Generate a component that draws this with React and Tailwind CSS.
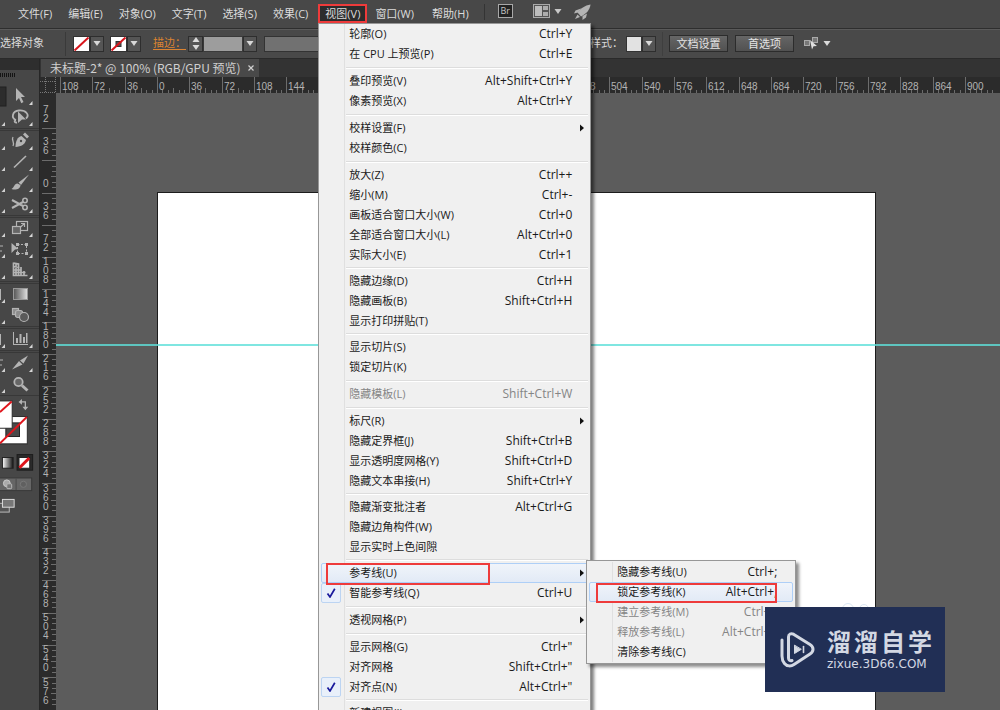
import { useState } from "react";
import clsx from "clsx";

const MENUS_BEFORE = ["文件(F)", "编辑(E)", "对象(O)", "文字(T)", "选择(S)", "效果(C)"];
const MENUS_AFTER = ["窗口(W)", "帮助(H)"];

const VIEW_MENU = [
  [
    { label: "轮廓(O)", keys: "Ctrl+Y" },
    { label: "在 CPU 上预览(P)", keys: "Ctrl+E" },
  ],
  [
    { label: "叠印预览(V)", keys: "Alt+Shift+Ctrl+Y" },
    { label: "像素预览(X)", keys: "Alt+Ctrl+Y" },
  ],
  [{ label: "校样设置(F)", arrow: true }, { label: "校样颜色(C)" }],
  [
    { label: "放大(Z)", keys: "Ctrl++" },
    { label: "缩小(M)", keys: "Ctrl+-" },
    { label: "画板适合窗口大小(W)", keys: "Ctrl+0" },
    { label: "全部适合窗口大小(L)", keys: "Alt+Ctrl+0" },
    { label: "实际大小(E)", keys: "Ctrl+1" },
  ],
  [
    { label: "隐藏边缘(D)", keys: "Ctrl+H" },
    { label: "隐藏画板(B)", keys: "Shift+Ctrl+H" },
    { label: "显示打印拼贴(T)" },
  ],
  [{ label: "显示切片(S)" }, { label: "锁定切片(K)" }],
  [{ label: "隐藏模板(L)", keys: "Shift+Ctrl+W", disabled: true }],
  [
    { label: "标尺(R)", arrow: true },
    { label: "隐藏定界框(J)", keys: "Shift+Ctrl+B" },
    { label: "显示透明度网格(Y)", keys: "Shift+Ctrl+D" },
    { label: "隐藏文本串接(H)", keys: "Shift+Ctrl+Y" },
  ],
  [
    { label: "隐藏渐变批注者", keys: "Alt+Ctrl+G" },
    { label: "隐藏边角构件(W)" },
    { label: "显示实时上色间隙" },
  ],
  [
    { label: "参考线(U)", arrow: true, active: true, submenu: true },
    { label: "智能参考线(Q)", keys: "Ctrl+U", checked: true },
  ],
  [{ label: "透视网格(P)", arrow: true }],
  [
    { label: "显示网格(G)", keys: 'Ctrl+"' },
    { label: "对齐网格", keys: 'Shift+Ctrl+"' },
    { label: "对齐点(N)", keys: 'Alt+Ctrl+"', checked: true },
  ],
  [{ label: "新建视图(I)..." }],
];

const GUIDES_MENU = [
  { label: "隐藏参考线(U)", keys: "Ctrl+;" },
  { label: "锁定参考线(K)", keys: "Alt+Ctrl+;", active: true, marked: true },
  { label: "建立参考线(M)", keys: "Ctrl+5", disabled: true },
  { label: "释放参考线(L)", keys: "Alt+Ctrl+5", disabled: true },
  { label: "清除参考线(C)" },
];

// ruler geometry: 36 units between labels
const STEP = 32.32;
const UNIT = 36;

function Caret({ className }) {
  return (
    <svg viewBox="0 0 8 5" className={clsx("h-[5px] w-2", className)} fill="currentColor">
      <path d="M0.5 0h7L4 5z" />
    </svg>
  );
}

function MenuRow({ item, children }) {
  return (
    <li className="relative">
      <button
        type="button"
        disabled={item.disabled}
        className={clsx(
          "flex h-5 w-full items-center rounded-[2px] border text-left",
          item.active
            ? "border-[#aecff7] bg-gradient-to-b from-[#f0f4fa] to-[#e2eaf6]"
            : "border-transparent",
          item.disabled ? "text-[#858585]" : "text-[#1a1a1a]"
        )}
      >
        <span className="flex w-[27px] shrink-0">
          {item.checked ? (
            <span className="-ml-px flex size-5 items-center justify-center rounded-[2px] border border-[#bcd4f2] bg-[#e9f0fa]">
              <svg viewBox="0 0 10 10" className="size-[10px]" fill="none" stroke="#1a1a9c" strokeWidth="1.7">
                <path d="M1.5 5.5L4 9L8.8 0.8" />
              </svg>
            </span>
          ) : null}
        </span>
        <span className="flex-1 text-[11px] leading-4 whitespace-nowrap">{item.label}</span>
        <span className="text-[12px] leading-4">{item.keys}</span>
        <span className="flex w-[15px] shrink-0 justify-center">
          {item.arrow ? (
            <svg viewBox="0 0 4 8" className="ml-1 h-2 w-1" fill="#111">
              <path d="M0 0.5L4 4L0 7.5z" />
            </svg>
          ) : null}
        </span>
      </button>
      {children}
    </li>
  );
}

function GuidesMenu() {
  return (
    <ul className="absolute -top-[3px] left-full -ml-[2px] w-[210px] border border-[#979797] bg-[#f0f0f0] px-[2px] py-[1px] shadow-[3px_3px_3px_rgba(0,0,0,0.45)]">
      <li className="absolute inset-y-[1px] left-[25px] w-px bg-[#e0e0e0]" />
      {GUIDES_MENU.map((item) => (
        <MenuRow key={item.label} item={item}>
          {item.marked ? (
            <span className="pointer-events-none absolute top-px left-[7px] h-5 w-[181px] border-2 border-[#ee3b3b]" />
          ) : null}
        </MenuRow>
      ))}
    </ul>
  );
}

function ViewMenu() {
  return (
    <div className="absolute top-full left-0 z-20 w-[273px] border border-[#979797] bg-[#f0f0f0] px-[2px] shadow-[3px_3px_3px_rgba(0,0,0,0.5)]">
      <div className="absolute inset-y-0 left-[25px] w-px bg-[#e0e0e0]" />
      {VIEW_MENU.map((group, index) => (
        <div key={group[0].label}>
          {index > 0 ? (
            <div
              className={clsx(
                "ml-[25px] flex items-center",
                VIEW_MENU[index - 1].length > 2 ? "h-[6px]" : "h-[7px]"
              )}
            >
              <div className="h-[2px] w-full border-t border-[#dddddd] bg-white" />
            </div>
          ) : null}
          <ul>
            {group.map((item) => (
              <MenuRow key={item.label} item={item}>
                {item.submenu ? (
                  <>
                    <span className="pointer-events-none absolute top-0 left-[5px] z-10 h-[22px] w-[164px] border-2 border-[#ee3b3b]" />
                    <GuidesMenu />
                  </>
                ) : null}
              </MenuRow>
            ))}
          </ul>
        </div>
      ))}
    </div>
  );
}

function MenuBar() {
  const [open, setOpen] = useState(true);
  const itemClass = "h-[19px] px-2 text-[11px] leading-4 whitespace-nowrap";

  return (
    <nav className="flex h-7 shrink-0 items-start bg-[#484848] pt-1 pl-[10px] text-[#dcdcdc]">
      {MENUS_BEFORE.map((name) => (
        <button key={name} type="button" className={itemClass}>
          {name}
        </button>
      ))}
      <div className="relative ml-[2px] flex">
        <button
          type="button"
          onClick={() => setOpen(!open)}
          className="h-[19px] border-2 border-[#ee3b3b] bg-[#2c2c2c] px-[5px] text-[11px] leading-4 whitespace-nowrap"
        >
          视图(V)
        </button>
        {open ? <ViewMenu /> : null}
      </div>
      <div className="flex gap-[2px]">
        {MENUS_AFTER.map((name) => (
          <button key={name} type="button" className={itemClass}>
            {name}
          </button>
        ))}
      </div>
      <span className="ml-[7px] h-4 w-px bg-[#343434]" />
      <button
        type="button"
        className="ml-[13px] flex h-[14px] w-[15px] items-center justify-center border border-[#a8a8a8] bg-[#222] text-[9px] leading-3 text-[#c4c4c4]"
      >
        Br
      </button>
      <button type="button" aria-label="排列文档" className="ml-5 flex items-center gap-1 text-[#c8c8c8]">
        <svg viewBox="0 0 17 14" className="h-[14px] w-[17px]">
          <rect x="0.5" y="0.5" width="16" height="13" fill="#555" stroke="#aaa" />
          <rect x="2" y="2" width="7" height="10" fill="#bdbdbd" />
          <rect x="10" y="2" width="5" height="4" fill="#adadad" />
          <rect x="10" y="8" width="5" height="4" fill="#adadad" />
        </svg>
        <Caret />
      </button>
      <button type="button" aria-label="GPU 性能" className="ml-3">
        <svg viewBox="0 0 17 16" className="h-4 w-[17px]" fill="#b4b4b4">
          <path d="M16.500 0.500C11 1.500 6 4.500 3.500 8.500l3.500 4c5-2.500 9-6.500 9.500-12z" />
          <path d="M7 4.500L1.500 6.500L0 9.500L4 8.500zM13 9.500L12 13.500L8.500 16L8.500 12z" />
          <path d="M3.500 10.500L1 15L6 13z" />
        </svg>
      </button>
    </nav>
  );
}

function DropButton({ label }) {
  return (
    <button
      type="button"
      aria-label={label}
      className="flex h-4 w-[14px] shrink-0 items-center justify-center border border-[#2e2e2e] bg-[#555] text-[#d8d8d8]"
    >
      <Caret />
    </button>
  );
}

function NoneSwatch({ stroke }) {
  return (
    <svg viewBox="0 0 17 16" className="h-4 w-[17px] shrink-0">
      <rect x="0.5" y="0.5" width="16" height="15" fill="#fff" stroke="#333" />
      {stroke ? <rect x="6" y="5.500" width="5" height="5" fill="#555" stroke="#333" /> : null}
      <path d="M1.500 14.500L15.500 1.500" stroke="#d8151c" strokeWidth="2" />
    </svg>
  );
}

function ControlBar() {
  const buttonClass =
    "h-[17px] w-[59px] shrink-0 border border-[#2c2c2c] bg-gradient-to-b from-[#666] to-[#515151] text-[11px] leading-[15px] text-[#e4e4e4]";

  return (
    <div className="flex h-[31px] shrink-0 items-center overflow-hidden border-t border-b border-t-[#2e2e2e] border-b-[#2a2a2a] bg-[#494949] text-[11px] text-[#dadada] shadow-[inset_0_1px_0_#5a5a5a]">
      <span className="-ml-[11px] w-[76px] shrink-0 whitespace-nowrap">未选择对象</span>
      <span className="mr-[7px] h-6 w-px shrink-0 bg-[#3a3a3a]" />
      <NoneSwatch />
      <DropButton label="填色" />
      <span className="w-[6px] shrink-0" />
      <NoneSwatch stroke />
      <DropButton label="描边颜色" />
      <label
        htmlFor="stroke-width"
        className="ml-3 shrink-0 text-[#dc8431] underline underline-offset-2"
      >
        描边：
      </label>
      <button
        type="button"
        aria-label="描边粗细"
        className="ml-[2px] flex h-4 w-[15px] shrink-0 flex-col items-center justify-center gap-[3px] border border-[#2e2e2e] bg-[#555]"
      >
        <Caret className="h-1 rotate-180" />
        <Caret className="h-1" />
      </button>
      <input id="stroke-width" className="h-4 w-10 shrink-0 border border-[#3a3a3a] bg-[#9d9d9d]" />
      <DropButton label="粗细" />
      <span className="ml-[7px] h-4 w-[300px] shrink-0 border border-[#333] bg-[#717171]" />
      <span className="ml-1 w-[58px] shrink-0 whitespace-nowrap">图形样式：</span>
      <span className="h-4 w-[16px] shrink-0 border border-[#333] bg-[#e2e2e2]" />
      <DropButton label="样式" />
      <span className="mx-[6px] h-6 w-px shrink-0 bg-[#3f3f3f]" />
      <button type="button" className={buttonClass}>
        文档设置
      </button>
      <button type="button" className={clsx(buttonClass, "ml-[7px]")}>
        首选项
      </button>
      <button type="button" aria-label="对齐选项" className="ml-[10px] flex items-center gap-1">
        <svg viewBox="0 0 15 13" className="h-[13px] w-[15px]">
          <rect x="0.5" y="3.500" width="5" height="5" fill="#777" stroke="#aaa" />
          <rect x="8.500" y="0.5" width="5" height="5" fill="#777" stroke="#aaa" />
          <path d="M6 3l7 6-3.500 0.200L8 12.500z" fill="#e0e0e0" />
        </svg>
        <Caret />
      </button>
    </div>
  );
}

const g = "#b4b4b4";

const TOOL_GROUPS = [
  [
    { name: "直接选择", icon: <path d="M6 2l9 9h-4l2.500 5-2.200 1.200L9 12l-3 3z" fill={g} /> },
    {
      name: "套索",
      icon: (
        <g fill="none" stroke={g} strokeWidth="1.800">
          <path d="M6 13C1 11 2 4 9 3.500C16 3 20 8 16 11.500M6 13c-2 0-2 3 1 2.500" />
          <path d="M8 4.500l8 8h-4L8 16z" fill={g} stroke="none" />
        </g>
      ),
    },
  ],
  [
    {
      name: "曲率",
      icon: (
        <g fill={g}>
          <path d="M5.500 16c0-6 2-10 6-11l4.500 4c-1 4.500-4.500 6.500-10.500 7z" />
          <path d="M13 3.500L15 1.500l4 4-2 2z" />
          <circle cx="11" cy="10" r="1.200" fill="#494949" />
          <path d="M3 6c-2 3 2 5 0 9" fill="none" stroke={g} strokeWidth="1.300" />
        </g>
      ),
    },
    { name: "直线段", icon: <path d="M4 15.500L16 4" stroke={g} strokeWidth="1.600" /> },
    {
      name: "画笔",
      icon: (
        <g fill={g}>
          <path d="M19 1.500L8.500 9.500l2.500 2.500z" />
          <path d="M7.500 10.500c-3.500 0-3 4-6 5.500c4 1.500 9 0 9-4z" />
        </g>
      ),
    },
    {
      name: "剪刀",
      icon: (
        <g fill="none" stroke={g} strokeWidth="1.600">
          <circle cx="15" cy="6.500" r="2.200" />
          <circle cx="15" cy="13.500" r="2.200" />
          <path d="M2 6l11 6M2 14l11-6" strokeWidth="2" />
        </g>
      ),
    },
  ],
  [
    {
      name: "比例缩放",
      icon: (
        <g fill="none" stroke={g} strokeWidth="1.200">
          <rect x="6.500" y="3.500" width="11" height="9" />
          <rect x="2.500" y="8.500" width="8" height="7" fill="#666" />
          <path d="M10 9.500L14.500 5.500M11 5.500h3.500v3.500" />
        </g>
      ),
    },
    {
      name: "自由变换",
      icon: (
        <g fill={g}>
          <path d="M1.500 4l7 6-3.500 0.500L1.500 14z" />
          <path d="M7.500 5.500h9v9h-9z" fill="none" stroke={g} strokeDasharray="2 1.500" />
          <path d="M6 4h3v3H6zM15 4h3v3h-3zM15 13h3v3h-3zM6 13h3v3H6z" />
        </g>
      ),
    },
    {
      name: "透视网格",
      icon: (
        <g fill="none" stroke={g} strokeWidth="1.700">
          <path d="M3.500 2.500v13h14M3.500 3l5 1v11M6 3v12M3.500 6.500l6 1M3.500 10h8M3.500 12.500h12M11 7v8M14 11v4" />
        </g>
      ),
    },
  ],
  [
    {
      name: "渐变",
      noCorner: true,
      icon: (
        <>
          <defs>
            <linearGradient id="tool-fade">
              <stop offset="0" stopColor="#555" />
              <stop offset="1" stopColor="#e0e0e0" />
            </linearGradient>
          </defs>
          <rect x="3.500" y="4.500" width="14" height="11" fill="url(#tool-fade)" stroke="#999" />
        </>
      ),
    },
    {
      name: "混合",
      noCorner: true,
      icon: (
        <g fill="#8d8d8d" stroke={g} strokeWidth="1.200">
          <rect x="2.500" y="3.500" width="6" height="6" />
          <rect x="5.500" y="5.500" width="7" height="7" rx="2" />
          <circle cx="14" cy="12" r="4.500" fill="#5a5a5a" />
        </g>
      ),
    },
  ],
  [
    {
      name: "柱形图",
      icon: (
        <g fill={g}>
          <path d="M3 3h1v12h14v1H3z" />
          <path d="M6 9h2v5H6zM9.500 5h2v9h-2zM13 8h2v6h-2zM16 4h1.500v10H16z" />
        </g>
      ),
    },
  ],
  [
    {
      name: "切片",
      icon: <path d="M2 16.500L9 8l3.500 3.500zM10 7.500l8-5-4.500 8z" fill={g} />,
    },
    {
      name: "缩放",
      noCorner: true,
      icon: (
        <g fill="none" stroke={g}>
          <circle cx="8.500" cy="8" r="4.200" strokeWidth="1.800" fill="#666" />
          <path d="M12 11.500l5.500 5" strokeWidth="3" />
        </g>
      ),
    },
  ],
];

function ToolPanel() {
  return (
    <aside className="flex w-10 shrink-0 flex-col overflow-hidden border-r border-[#262626] bg-[#2e2e2e] pt-[11px]">
      <div className="flex-1 bg-[#474747]">
        <div className="h-4 pt-[3px]">
          <div className="h-1 w-4 bg-[repeating-linear-gradient(90deg,#141414_0_1px,#474747_1px_2px)]" />
        </div>
        {TOOL_GROUPS.map((group, index) => (
          <div
            key={group[0].name}
            className={clsx(index > 0 && "border-t-3 border-double border-[#383838]")}
          >
            {group.map((tool) => (
              <div key={tool.name} className="flex h-[21px] items-center">
                <svg viewBox="0 0 10 21" className="h-[21px] w-[10px]">
                  {tool.name === "直接选择" ? (
                    <rect x="-1" y="1" width="7" height="19" fill="#2c2c2c" stroke="#202020" />
                  ) : (
                    <path d="M5 15v4H1.500z" fill="#d0d0d0" />
                  )}
                  {tool.name === "柱形图" || tool.name === "渐变" ? (
                    <path d="M0 5v11" stroke={g} strokeWidth="2" />
                  ) : null}
                  {tool.name === "切片" || tool.name === "自由变换" ? (
                    <path d="M0 7h3M0 12h2" stroke={g} />
                  ) : null}
                </svg>
                <button type="button" aria-label={tool.name} className="h-[21px] w-[23px]">
                  <svg viewBox="0 0 23 21" className="h-[21px] w-[23px]">
                    {tool.icon}
                    {tool.noCorner ? null : <path d="M22.500 15v4H19z" fill="#d8d8d8" />}
                  </svg>
                </button>
              </div>
            ))}
          </div>
        ))}
        <div className="flex border-t border-[#383838]">
          <svg viewBox="0 2 40 122" className="h-[122px] w-10">
            <defs>
              <linearGradient id="panel-fade">
                <stop offset="0" stopColor="#fff" />
                <stop offset="1" stopColor="#111" />
              </linearGradient>
            </defs>
            <path d="M21 6.500h5v6" fill="none" stroke={g} strokeWidth="1.300" />
            <path d="M19 6.500l3.500-3v6zM23 11.500h6l-3 3.500z" fill={g} />
            <rect x="-8" y="21.500" width="36" height="28" fill="#fff" stroke="#2a2a2a" />
            <rect x="6" y="28" width="14" height="14" fill="#4a4a4a" stroke="#222" />
            <path d="M0 49L27.500 22" stroke="#e0151c" strokeWidth="2" />
            <rect x="-8" y="5.500" width="20.500" height="28" fill="#fff" stroke="#2a2a2a" />
            <path d="M0 17L12 6" stroke="#e0151c" strokeWidth="2" />
            <rect x="17.500" y="60.500" width="16" height="16" fill="#2a2a2a" stroke="#1c1c1c" />
            <rect x="2.500" y="63.500" width="11" height="11" fill="url(#panel-fade)" stroke="#222" />
            <rect x="19.500" y="63.500" width="11" height="11" fill="#fff" stroke="#222" />
            <path d="M20 74L30 64" stroke="#e0151c" strokeWidth="3" />
            <rect x="-2" y="84.500" width="34.500" height="13" fill="#666" stroke="#383838" />
            <path d="M16.500 85v12" stroke="#4a4a4a" />
            <circle cx="7" cy="90" r="3.500" fill="#aaa" stroke="#ccc" />
            <rect x="7" y="90.500" width="5" height="5" rx="1" fill="#777" stroke="#bbb" />
            <circle cx="24" cy="91" r="3.200" fill="#606060" stroke="#777" />
            <rect x="-2" y="110.500" width="11.500" height="9" fill="#555" stroke="#bbb" />
            <rect x="2.500" y="106.500" width="12" height="8" fill="#777" stroke="#ddd" />
          </svg>
        </div>
      </div>
    </aside>
  );
}

function rulerMarks(length, first) {
  return Array.from({ length: Math.floor(length / STEP) }, (_, i) => i + first);
}

function HorizontalRuler() {
  return (
    <svg
      className="h-4 min-w-0 flex-1 bg-[#2b2b2b] font-['Liberation_Sans',sans-serif]"
      fontSize="10"
      fill="#b2b2b2"
    >
      {rulerMarks(window.innerWidth - 56, -3).map((n) => {
        const x = 101 + n * STEP;
        return (
          <g key={n}>
            <path d={`M${Math.round(x)}.5 0v16`} stroke="#6c6c6c" />
            {[1, 2, 3, 4, 5].map((k) => (
              <path
                key={k}
                d={`M${Math.round(x + (k * STEP) / 6)}.5 ${k === 3 ? 11 : 13}v5`}
                stroke="#6c6c6c"
              />
            ))}
            <text x={Math.round(x) + 2} y="13">
              {Math.abs(n * UNIT)}
            </text>
          </g>
        );
      })}
    </svg>
  );
}

function VerticalRuler() {
  return (
    <svg
      className="h-full w-4 shrink-0 bg-[#2b2b2b] font-['Liberation_Sans',sans-serif]"
      fontSize="10"
      fill="#b2b2b2"
    >
      {rulerMarks(window.innerHeight - 93, -2).map((n) => {
        const y = 99.5 + n * STEP;
        const digits = String(Math.abs(n * UNIT)).split("");
        return (
          <g key={n}>
            <path d={`M2 ${Math.round(y)}.5h14`} stroke="#6c6c6c" />
            {[1, 2, 3, 4, 5].map((k) => (
              <path
                key={k}
                d={`M${k === 3 ? 11 : 12} ${Math.round(y + (k * STEP) / 6)}.5h5`}
                stroke="#6c6c6c"
              />
            ))}
            {digits.map((digit, k) => (
              <text key={k} x="3" y={Math.round(y) - 6 - (digits.length - 1 - k) * 9}>
                {digit}
              </text>
            ))}
          </g>
        );
      })}
    </svg>
  );
}

function DocumentArea() {
  return (
    <main className="flex min-w-0 flex-1 flex-col">
      <div className="flex h-[18px] shrink-0 items-stretch bg-[#333] pl-px">
        <div className="flex items-center gap-[7px] bg-[#494949] pr-[5px] pl-[9px] text-[#d0d0d0]">
          <h1 className="font-['Noto_Sans_CJK_SC',sans-serif] text-[12px] leading-4 whitespace-nowrap">
            未标题-2* @ 100% (RGB/GPU 预览)
          </h1>
          <button type="button" aria-label="关闭">
            <svg viewBox="0 0 6 6" className="size-[6px]" stroke="currentColor" strokeWidth="1.200">
              <path d="M0.500 0.500l5 5M5.500 0.500l-5 5" />
            </svg>
          </button>
        </div>
      </div>
      <div className="flex h-4 shrink-0">
        <svg viewBox="0 0 16 16" className="size-4 shrink-0 bg-[#2b2b2b]" stroke="#777" strokeDasharray="1 1">
          <path d="M5.500 0v16M0 4.500h16M15.500 0v16M0 15.500h16" />
        </svg>
        <HorizontalRuler />
      </div>
      <div className="flex min-h-0 flex-1">
        <VerticalRuler />
        <div className="relative min-w-0 flex-1 overflow-hidden bg-[#5c5c5c]">
          <div className="absolute top-[99px] left-[101px] h-[1000px] w-[719px] border border-[#1c1c1c] bg-white" />
          <div className="absolute top-[251px] h-[2px] w-full bg-[#5fe0da]/80" />
          <svg viewBox="0 0 30 12" className="absolute top-[509px] left-[784px] h-3 w-[30px]" fill="none" stroke="#dbe7f3">
            <circle cx="8" cy="7" r="5.500" />
            <circle cx="24" cy="7" r="4.500" />
          </svg>
        </div>
      </div>
    </main>
  );
}

function Watermark() {
  return (
    <div className="absolute right-[55px] bottom-[18px] z-30 flex h-[85px] w-[180px] items-center gap-3 bg-[#212f55] pl-[15px] text-[#d3d8e3]">
      <svg viewBox="0 0 35 36" className="h-9 w-[35px] shrink-0" fill="none" stroke="currentColor" strokeWidth="3" strokeLinecap="round" strokeLinejoin="round">
        <path d="M12 28.500C10 29 8.500 28 8.500 26V5c0-3 2.500-4 5-2.800L30 12.500c4 2.500 4 7 0 9.500L14 32.500c-3 2-7 2-9.500-1C2.500 29 2 27 2 24V8" />
        <path d="M14.500 13.500v8l6.500-4z" fill="currentColor" strokeWidth="1" />
        <path d="M23.500 14.500v6" strokeWidth="1.600" />
      </svg>
      <div className="w-[105px]">
        <p className="flex justify-between text-[24px] leading-7 font-bold">
          <span>溜</span>
          <span>溜</span>
          <span>自</span>
          <span>学</span>
        </p>
        <p className="font-['DejaVu_Sans',sans-serif] text-[12px] leading-4 whitespace-nowrap">zixue.3D66.COM</p>
      </div>
    </div>
  );
}

export default function App() {
  return (
    <div className="relative flex h-screen flex-col overflow-hidden bg-[#5c5c5c] font-['Open_Sans','Noto_Sans_CJK_SC',sans-serif]">
      <MenuBar />
      <ControlBar />
      <div className="flex min-h-0 flex-1">
        <ToolPanel />
        <DocumentArea />
      </div>
      <Watermark />
    </div>
  );
}
